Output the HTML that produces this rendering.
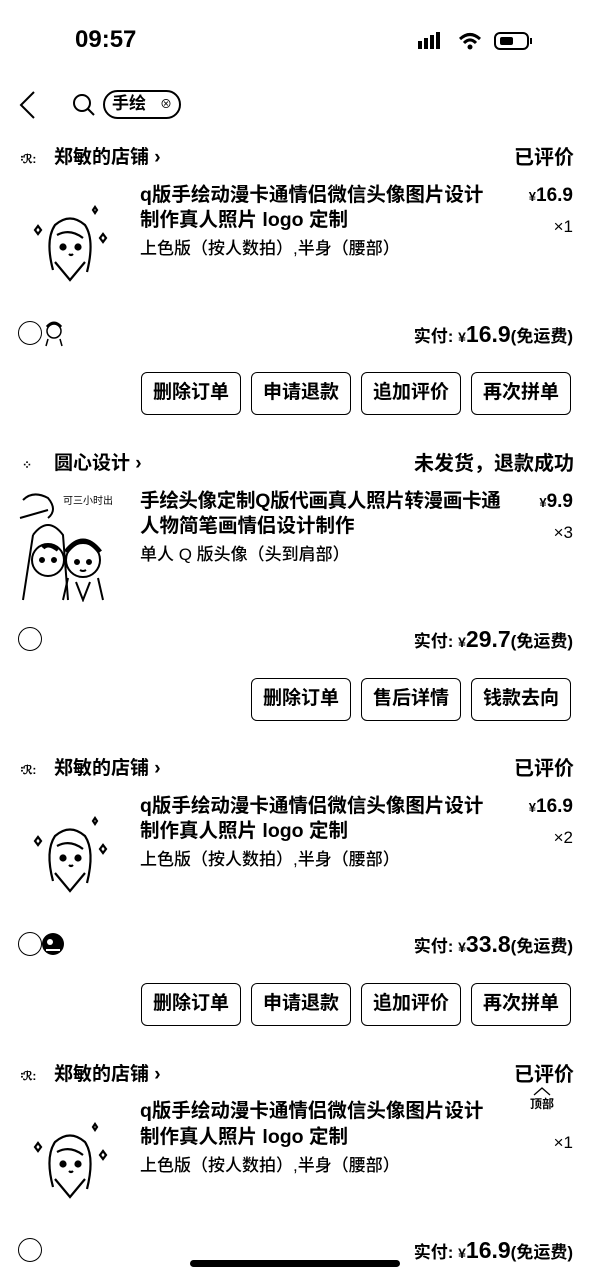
<!DOCTYPE html>
<html><head><meta charset="utf-8">
<style>
*{margin:0;padding:0;box-sizing:border-box}
body{width:590px;height:1280px;background:#fff;position:relative;overflow:hidden;color:#000;font-family:"Liberation Sans","Noto Sans CJK SC",sans-serif}
.a{position:absolute;white-space:nowrap}
.shop{font-size:19px;line-height:20px;font-weight:bold}
.st{font-size:20px;line-height:22px;font-weight:bold;right:16px}
.t{font-size:19.5px;line-height:22px;font-weight:bold;left:140px}
.sp{font-size:17px;line-height:20px;font-weight:500;left:140px}
.pr{right:17px;font-size:19px;line-height:20px;font-weight:bold}
.pr small{font-size:13px}
.q{right:17px;font-size:17px;line-height:20px;font-weight:500}
.paid{right:17px;font-size:17px;line-height:26px;font-weight:bold}
.paid b{font-size:23px;font-weight:bold}
.paid small{font-size:14px}
.btn{position:absolute;width:100px;height:43px;border:1.5px solid #000;border-radius:6px;font-size:19px;line-height:40px;text-align:center;font-weight:bold}
.circ{position:absolute;width:24px;height:24px;border:1.5px solid #000;border-radius:50%;left:18px}
</style></head><body>
<div class="a" style="left:75px;top:26px;font-size:24px;font-weight:bold;line-height:28px">09:57</div>
<svg class="a" style="left:418px;top:30px" width="125" height="22" viewBox="0 0 125 22">
<g fill="#000"><rect x="0" y="11" width="4" height="8"/><rect x="6" y="8" width="4" height="11"/><rect x="12" y="5" width="4" height="14"/><rect x="18" y="2" width="4" height="17"/></g>
<path d="M42 9 Q52 0 62 9" stroke="#000" stroke-width="3" fill="none"/><path d="M46 13 Q52 7 58 13" stroke="#000" stroke-width="3" fill="none"/><circle cx="52" cy="17" r="2.5"/>
<rect x="77" y="3" width="33" height="16" rx="5" fill="none" stroke="#000" stroke-width="2"/><rect x="82" y="7" width="13" height="8" rx="2"/><rect x="112" y="8" width="2" height="6"/>
</svg>
<svg class="a" style="left:16px;top:90px" width="22" height="30"><path d="M18 2 L5 15 L18 28" stroke="#000" stroke-width="2" fill="none"/></svg>
<svg class="a" style="left:70px;top:92px" width="28" height="26"><circle cx="12" cy="11" r="8" stroke="#000" stroke-width="2" fill="none"/><path d="M18 17 L24 23" stroke="#000" stroke-width="2"/></svg>
<div class="a" style="left:103px;top:90px;width:78px;height:29px;border:2px solid #000;border-radius:15px"></div>
<div class="a" style="left:112px;top:93px;font-size:17px;font-weight:bold;line-height:22px">手绘</div>
<div class="a" style="left:160px;top:97px;font-size:12px;line-height:14px">⊗</div>

<!-- card1 -->
<div class="a shop" style="left:18px;top:148px"><span style="font-size:12px">᠄ℛ:</span></div>
<div class="a shop" style="left:54px;top:148px">郑敏的店铺 ›</div>
<div class="a st" style="top:147px">已评价</div>
<svg class="a" style="left:25px;top:200px" width="95" height="85" viewBox="0 0 95 85"><g stroke="#000" stroke-width="2.2" fill="none"><path d="M28 70 Q20 40 30 25 Q45 12 60 25 Q70 40 62 72"/><path d="M32 35 Q45 28 58 38"/><circle cx="38" cy="47" r="2.5" fill="#000"/><circle cx="53" cy="47" r="2.5" fill="#000"/><path d="M44 54 Q46 56 48 54"/><path d="M30 62 L45 80 L60 62"/><path d="M10 30 l3 -4 l3 4 l-3 4z"/><path d="M75 38 l3 -4 l3 4 l-3 4z"/><path d="M68 10 l2 -3 l2 3 l-2 3z"/></g></svg>
<div class="a t" style="top:184px">q版手绘动漫卡通情侣微信头像图片设计</div>
<div class="a t" style="top:209px">制作真人照片 logo 定制</div>
<div class="a pr" style="top:186px"><small>¥</small>16.9</div>
<div class="a q" style="top:217px">×1</div>
<div class="a sp" style="top:239px">上色版（按人数拍）,半身（腰部）</div>
<div class="circ" style="top:321px"></div>
<svg class="a" style="left:40px;top:319px" width="26" height="28"><circle cx="14" cy="12" r="7" stroke="#000" stroke-width="1.5" fill="none"/><path d="M7 8 Q14 0 21 8" stroke="#000" stroke-width="3" fill="none"/><path d="M8 20 L6 27 M20 20 L22 27" stroke="#000" stroke-width="1.5"/></svg>
<div class="a paid" style="top:321px">实付: <small>¥</small><b>16.9</b>(免运费)</div>
<div class="btn" style="left:141px;top:372px">删除订单</div>
<div class="btn" style="left:251px;top:372px">申请退款</div>
<div class="btn" style="left:361px;top:372px">追加评价</div>
<div class="btn" style="left:471px;top:372px">再次拼单</div>

<!-- card2 -->
<div class="a shop" style="left:22px;top:454px"><span style="font-size:12px">⁘</span></div>
<div class="a shop" style="left:54px;top:454px">圆心设计 ›</div>
<div class="a st" style="top:453px">未发货，退款成功</div>
<svg class="a" style="left:18px;top:490px" width="95" height="112" viewBox="0 0 95 112"><g stroke="#000" stroke-width="2" fill="none"><path d="M5 10 Q15 0 30 8 Q40 20 30 28 M2 28 L30 20"/><path d="M15 45 Q30 25 45 45 L50 110 M15 45 L5 110"/><circle cx="30" cy="70" r="16"/><circle cx="24" cy="70" r="2" fill="#000"/><circle cx="36" cy="70" r="2" fill="#000"/><path d="M25 58 Q30 52 40 60" stroke-width="4"/><circle cx="65" cy="70" r="17"/><path d="M48 62 Q65 40 82 62" stroke-width="5"/><circle cx="59" cy="72" r="2" fill="#000"/><circle cx="71" cy="72" r="2" fill="#000"/><path d="M62 80 Q65 82 68 80"/><path d="M50 88 L45 110 M80 88 L85 110 M58 92 L65 110 L72 92"/></g><text x="45" y="14" font-size="10" font-family="Noto Sans CJK SC">可三小时出图</text></svg>
<div class="a t" style="top:490px;letter-spacing:-0.3px">手绘头像定制Q版代画真人照片转漫画卡通</div>
<div class="a t" style="top:515px">人物简笔画情侣设计制作</div>
<div class="a pr" style="top:492px"><small>¥</small>9.9</div>
<div class="a q" style="top:523px">×3</div>
<div class="a sp" style="top:545px">单人 Q 版头像（头到肩部）</div>
<div class="circ" style="top:627px"></div>
<div class="a paid" style="top:626px">实付: <small>¥</small><b>29.7</b>(免运费)</div>
<div class="btn" style="left:251px;top:678px">删除订单</div>
<div class="btn" style="left:361px;top:678px">售后详情</div>
<div class="btn" style="left:471px;top:678px">钱款去向</div>

<!-- card3 -->
<div class="a shop" style="left:18px;top:759px"><span style="font-size:12px">᠄ℛ:</span></div>
<div class="a shop" style="left:54px;top:759px">郑敏的店铺 ›</div>
<div class="a st" style="top:758px">已评价</div>
<svg class="a" style="left:25px;top:811px" width="95" height="85" viewBox="0 0 95 85"><g stroke="#000" stroke-width="2.2" fill="none"><path d="M28 70 Q20 40 30 25 Q45 12 60 25 Q70 40 62 72"/><path d="M32 35 Q45 28 58 38"/><circle cx="38" cy="47" r="2.5" fill="#000"/><circle cx="53" cy="47" r="2.5" fill="#000"/><path d="M44 54 Q46 56 48 54"/><path d="M30 62 L45 80 L60 62"/><path d="M10 30 l3 -4 l3 4 l-3 4z"/><path d="M75 38 l3 -4 l3 4 l-3 4z"/><path d="M68 10 l2 -3 l2 3 l-2 3z"/></g></svg>
<div class="a t" style="top:795px">q版手绘动漫卡通情侣微信头像图片设计</div>
<div class="a t" style="top:820px">制作真人照片 logo 定制</div>
<div class="a pr" style="top:797px"><small>¥</small>16.9</div>
<div class="a q" style="top:828px">×2</div>
<div class="a sp" style="top:850px">上色版（按人数拍）,半身（腰部）</div>
<div class="circ" style="top:932px"></div>
<svg class="a" style="left:40px;top:930px" width="26" height="28"><circle cx="13" cy="14" r="11" fill="#000"/><circle cx="10" cy="12" r="3" fill="#fff"/><path d="M6 20 L20 20" stroke="#fff" stroke-width="2"/></svg>
<div class="a paid" style="top:931px">实付: <small>¥</small><b>33.8</b>(免运费)</div>
<div class="btn" style="left:141px;top:983px">删除订单</div>
<div class="btn" style="left:251px;top:983px">申请退款</div>
<div class="btn" style="left:361px;top:983px">追加评价</div>
<div class="btn" style="left:471px;top:983px">再次拼单</div>

<!-- card4 -->
<div class="a shop" style="left:18px;top:1065px"><span style="font-size:12px">᠄ℛ:</span></div>
<div class="a shop" style="left:54px;top:1065px">郑敏的店铺 ›</div>
<div class="a st" style="top:1064px">已评价</div>
<svg class="a" style="left:25px;top:1117px" width="95" height="85" viewBox="0 0 95 85"><g stroke="#000" stroke-width="2.2" fill="none"><path d="M28 70 Q20 40 30 25 Q45 12 60 25 Q70 40 62 72"/><path d="M32 35 Q45 28 58 38"/><circle cx="38" cy="47" r="2.5" fill="#000"/><circle cx="53" cy="47" r="2.5" fill="#000"/><path d="M44 54 Q46 56 48 54"/><path d="M30 62 L45 80 L60 62"/><path d="M10 30 l3 -4 l3 4 l-3 4z"/><path d="M75 38 l3 -4 l3 4 l-3 4z"/><path d="M68 10 l2 -3 l2 3 l-2 3z"/></g></svg>
<div class="a t" style="top:1100px">q版手绘动漫卡通情侣微信头像图片设计</div>
<div class="a t" style="top:1126px">制作真人照片 logo 定制</div>
<div class="a" style="left:518px;top:1084px;width:48px;height:38px;background:#fff;text-align:center"><svg width="20" height="10" style="display:block;margin:2px auto 0"><path d="M2 9 L10 2 L18 9" stroke="#000" stroke-width="1.3" fill="none"/></svg><div style="font-size:12px;line-height:16px;font-weight:bold">顶部</div></div>
<div class="a q" style="top:1133px">×1</div>
<div class="a sp" style="top:1156px">上色版（按人数拍）,半身（腰部）</div>
<div class="circ" style="top:1238px"></div>
<div class="a paid" style="top:1237px">实付: <small>¥</small><b>16.9</b>(免运费)</div>
<div class="a" style="left:190px;top:1260px;width:210px;height:7px;border-radius:4px;background:#000"></div>
</body></html>
